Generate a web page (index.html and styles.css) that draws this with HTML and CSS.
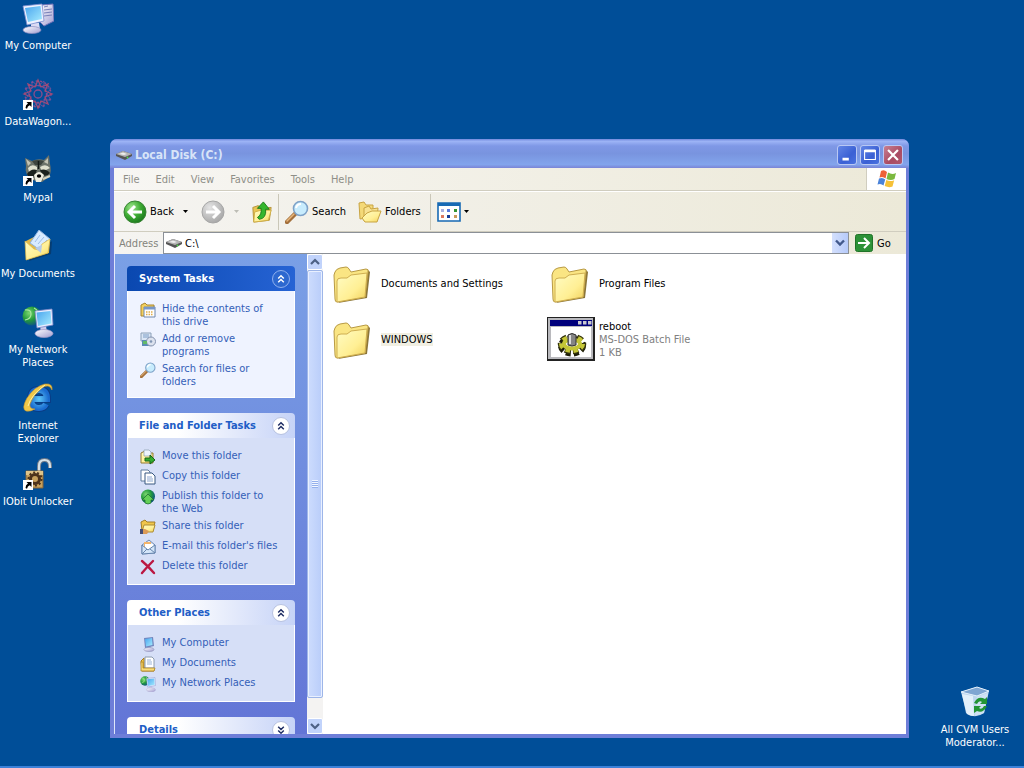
FILE: index.html
```html
<!DOCTYPE html>
<html lang="en">
<head>
<meta charset="utf-8">
<title>Local Disk (C:)</title>
<link rel="stylesheet" href="styles.css">
</head>
<body>
<svg class="defs" aria-hidden="true">
  <defs>
    <linearGradient id="gFolder" x1="0" y1="0" x2="1" y2="1"><stop offset="0" stop-color="#fffcc4"/><stop offset=".6" stop-color="#ffef94"/><stop offset="1" stop-color="#f0cf58"/></linearGradient>
    <linearGradient id="gScreen" x1="0" y1="0" x2="1" y2="1"><stop offset="0" stop-color="#4aa5ee"/><stop offset="1" stop-color="#a6ecff"/></linearGradient>
    <linearGradient id="gCase" x1="0" y1="0" x2="1" y2="1"><stop offset="0" stop-color="#ffffff"/><stop offset="1" stop-color="#a09cd0"/></linearGradient>
    <radialGradient id="gGreen" cx=".35" cy=".3" r=".8"><stop offset="0" stop-color="#a2e890"/><stop offset=".5" stop-color="#3fac34"/><stop offset="1" stop-color="#147018"/></radialGradient>
    <radialGradient id="gGrey" cx=".35" cy=".3" r=".8"><stop offset="0" stop-color="#e4e4e4"/><stop offset="1" stop-color="#a2a2a2"/></radialGradient>
    <radialGradient id="gGlobe" cx=".35" cy=".35" r=".75"><stop offset="0" stop-color="#7cd870"/><stop offset=".5" stop-color="#239a3c"/><stop offset="1" stop-color="#0a4890"/></radialGradient>
    <radialGradient id="gIe" cx=".5" cy=".5" r=".6"><stop offset="0" stop-color="#5fc8f8"/><stop offset="1" stop-color="#1a6cd0"/></radialGradient>
    <symbol id="folder" viewBox="0 0 38 38">
      <path d="M5 37 34 32 37 6 35 4 8 35Z" fill="#8b7538"/>
      <path d="M2 6Q3 3 7 2L13 1Q15 1 16 3L18 6 33 3Q36 3 35 6L32 31 4 36Q2 36 2 33L1 9Z" fill="#fae583" stroke="#b89a44"/>
      <path d="M4 15Q4 12 8 12L14 12 18 9 34 7 32 31 4 36Z" fill="url(#gFolder)" stroke="#cfae50"/>
    </symbol>
    <symbol id="computer" viewBox="0 0 32 32">
      <path d="M20 3 31 2 32 19 22 24 18 20Z" fill="url(#gCase)" stroke="#6f72b8"/>
      <path d="M22 5 26 4M22 8 30 7M22 11 30 10M22 14 30 13" stroke="#7880b8"/>
      <path d="M9 21h8l1 6H9Z" fill="#dcdcf4"/><ellipse cx="10" cy="28" rx="9" ry="3.500" fill="url(#gCase)" stroke="#8c8cc0" stroke-width=".7"/>
      <path d="M1 4 20 2 22 19 5 23Z" fill="#eef2ff" stroke="#7d8ed0" stroke-width=".8"/>
      <path d="M3 6 18.500 4 20 17 6 20Z" fill="url(#gScreen)"/>
    </symbol>
    <symbol id="network" viewBox="0 0 32 32">
      <circle cx="10" cy="10" r="9.500" fill="url(#gGlobe)"/><path d="M3 4Q9 3 9 8T3 14M12 2Q18 5 14 9" stroke="#a8e6a0" fill="none" stroke-width="1.200"/>
      <path d="M18 20h6l1 6h-6Z" fill="#cfcdec"/><ellipse cx="22" cy="27.500" rx="9" ry="4" fill="url(#gCase)" stroke="#a29bc8" stroke-width=".7"/>
      <path d="M13 5 30 3 31 19 15 22Z" fill="#e9eeff" stroke="#7b86c8" stroke-width=".8"/><path d="M14.500 6.500 28.500 5 29.500 17.500 16 20Z" fill="url(#gScreen)"/>
    </symbol>
    <symbol id="drive" viewBox="0 0 16 10">
      <path d="M0 4 7 1 16 4 16 6 9 10 0 6Z" fill="#555"/><path d="M0 4 7 1 16 4 9 7Z" fill="#b4b4b4"/><path d="M3 4 7 2.500 11 4 8 5Z" fill="#eee"/><circle cx="11.500" cy="7.500" r=".9" fill="#4fdc4a"/>
    </symbol>
    <symbol id="lens" viewBox="0 0 24 24">
      <path d="M2 22 10 14" stroke="#a4703c" stroke-width="4.500" stroke-linecap="round"/><path d="M2 21 9 14" stroke="#e7b67c" stroke-width="1.500" stroke-linecap="round"/>
      <circle cx="15.500" cy="8.500" r="7" fill="#c8ecfd" stroke="#7ea2c8" stroke-width="1.600"/><path d="M11 8Q12 4 16 4" stroke="#fff" stroke-width="2" fill="none"/>
    </symbol>
    <symbol id="shortcut" viewBox="0 0 10 10"><path d="M0 0h10v10H0Z" fill="#fff"/><path d="M3.500 2H8.500V7L6.800 5.300Q4.500 6 4 8.800L2.500 8Q2.500 5 5 3.600Z"/></symbol>
    <symbol id="chevUp" viewBox="0 0 20 20"><path d="M6.500 9.500 10 6 13.500 9.500M6.500 14 10 10.500 13.500 14" fill="none" stroke="currentColor" stroke-width="1.800"/></symbol>
    <symbol id="chevDown" viewBox="0 0 20 20"><path d="M6.500 6 10 9.500 13.500 6M6.500 10.500 10 14 13.500 10.500" fill="none" stroke="currentColor" stroke-width="1.800"/></symbol>
    <symbol id="caret" viewBox="0 0 5 3"><path d="M0 0h5L2.500 3Z" fill="currentColor"/></symbol>
    <symbol id="docs" viewBox="0 0 16 16"><path d="M1 5 4 2v10h10v3H2Z" fill="#f4cb4d" stroke="#a97c1b"/><path d="M5 1h7l2 2v9H5Z" fill="#fff" stroke="#8c9cae"/><path d="M7 4h4M7 6h5M7 8h5" stroke="#9ab2d6"/><path d="M1 6v9h13l1-3H5L3 12V6Z" fill="#f8dc78" stroke="#a97c1b" stroke-width=".7"/></symbol>
  </defs>
</svg>

<main class="desktop">
  <nav class="shortcuts" aria-label="Desktop">
    <a class="shortcut" href="#computer"><svg class="icon32"><use href="#computer"/></svg><span>My Computer</span></a>
    <a class="shortcut" href="#datawagon">
      <svg class="icon32" viewBox="0 0 32 32">
        <g fill="none" stroke="#8c4c8c" stroke-width="1.300"><circle cx="16" cy="16" r="4"/><circle cx="16" cy="16" r="8.500" stroke-dasharray="3 1"/><circle cx="16" cy="16" r="13" stroke-dasharray="2 2.500"/>
        <path d="M16 2 19 9 26 6 23 13 30 16 23 19 26 26 19 23 16 30 13 23 6 26 9 19 2 16 9 13 6 6 13 9Z" stroke="#a24a76"/><path d="M10 3 16 8 22 3 22 10 29 10 25 16 29 22 22 22 22 29 16 25 10 29 10 22 3 22 7 16 3 10 10 10Z" stroke="#77549c" stroke-width=".8"/></g>
        <use href="#shortcut" x="1" y="22" width="10" height="10"/>
      </svg><span>DataWagon...</span></a>
    <a class="shortcut" href="#mypal">
      <svg class="icon32" viewBox="0 0 32 32">
        <path d="M3 4 10 7Q16 4 22 6L27 1 28 10Q30 17 27 23L20 28 10 26Q2 20 4 12Z" fill="#6c736a"/>
        <path d="M4 5 9 9 6 12ZM26 4 26 10 22 8Z" fill="#c4c4b4"/><path d="M10 7Q16 5 22 7L19 11H13Z" fill="#3d443e"/><path d="M6 14Q10 9 15 13V18L7 18ZM18 13Q24 9 28 14L20 18Z" fill="#dfe0ce"/>
        <path d="M5 20Q9 14 15 16L14 21Q9 24 6 22ZM18 16Q24 14 28 19 25 23 20 21Z" fill="#1b211d"/><path d="M12 21Q17 15 22 21L19 28H14Z" fill="#efeee0"/><ellipse cx="17" cy="22" rx="2.200" ry="1.800"/><path d="M6 23 12 25M28 22 21 25" stroke="#d6d4c0" stroke-width="2"/><path d="M16.500 7V15" stroke="#131916" stroke-width="1.500"/>
        <use href="#shortcut" x="1" y="22" width="10" height="10"/>
      </svg><span>Mypal</span></a>
    <a class="shortcut" href="#documents">
      <svg class="icon32" viewBox="0 0 32 32"><path d="M7 31 29 24 30 11 8 28Z" fill="#093461" opacity=".7"/><path d="M4 11 12 7 28 10 27 23 4 30Z" fill="#e2ba49"/><path d="M8 13 17 0 28 9 21 22Z" fill="#d8ebff" stroke="#8fb2df"/><path d="M13 12 18 5M16 14 22 7M19 16 25 10" stroke="#9dbce8"/><path d="M3 11 12 19 17 20 20 14 28 9 26 23 4 30Z" fill="url(#gFolder)" stroke="#d9b648" stroke-width=".7"/><path d="M13 18 19 23 20 15Z" fill="#b5cae9"/></svg><span>My Documents</span></a>
    <a class="shortcut" href="#network"><svg class="icon32"><use href="#network"/></svg><span>My Network Places</span></a>
    <a class="shortcut" href="#ie">
      <svg class="icon32" viewBox="0 0 32 32"><path d="M10 17H25Q25 8 17 8T9 17Q9 26 17 26 22 26 24 22" stroke="#093c86" stroke-width="8" fill="none"/><path d="M10 17H25Q25 8 17 8T9 17Q9 26 17 26 22 26 24 22" stroke="url(#gIe)" stroke-width="6" fill="none"/><path d="M30 8Q31 1 23 2 13 4 5 16-1 27 4 29 8 30 13 27 7 27 8 22 11 13 20 6 27 1 30 8Z" fill="#f0c848" stroke="#c7952a" stroke-width=".6"/><path d="M6 24Q9 13 23 3" stroke="#fff1a4" stroke-width="1" fill="none"/></svg><span>Internet Explorer</span></a>
    <a class="shortcut" href="#unlocker">
      <svg class="icon32" viewBox="0 0 32 32"><path d="M17 14V8Q17 2 22.500 2T28 8V10" fill="none" stroke="#6c7888" stroke-width="4"/><path d="M17 14V8Q17 2 22.500 2T28 8V10" fill="none" stroke="#d5e0e7" stroke-width="2.200"/><path d="M4 13H21V30H4Z" fill="#c7a05c" stroke="#826339"/><path d="M4 13H21V17H4Z" fill="#e0c489"/><circle cx="13" cy="21" r="4.500" fill="none" stroke="#4c321b" stroke-width="3"/><circle cx="13" cy="21" r="6.500" fill="none" stroke="#4c321b" stroke-width="2" stroke-dasharray="2 2"/><use href="#shortcut" x="1" y="22" width="10" height="10"/></svg><span>IObit Unlocker</span></a>
  </nav>

  <section class="window" aria-label="Local Disk (C:)">
    <header class="titlebar">
      <svg class="drive"><use href="#drive"/></svg>
      <h1 class="title">Local Disk (C:)</h1>
      <button class="caption" aria-label="Minimize"><svg viewBox="0 0 20 20"><path d="M5 13h7v3H5Z" fill="#fff"/></svg></button>
      <button class="caption" aria-label="Maximize"><svg viewBox="0 0 20 20"><path d="M4 5H16V15H4Z" fill="none" stroke="#fff" stroke-width="1.200"/><path d="M4 5.500H16" stroke="#fff" stroke-width="3"/></svg></button>
      <button class="caption close" aria-label="Close"><svg viewBox="0 0 20 20"><path d="M4.500 4.500 15.500 15.500M15.500 4.500 4.500 15.500" stroke="#fff" stroke-width="2.400"/></svg></button>
    </header>

    <div class="menubar">
      <div class="menus">
        <button>File</button><button>Edit</button><button>View</button><button>Favorites</button><button>Tools</button><button>Help</button>
      </div>
      <div class="flag"><svg viewBox="0 0 20 18"><path d="M4 1Q7-1 10 2L8.500 8.500Q6 6 2.500 7.500Z" fill="#ee6238"/><path d="M11 2.500Q15 5 19 3L17.500 9Q14 11 9.500 9Z" fill="#7bb93f"/><path d="M2 8.500Q6 7 8.200 9.500L6.500 15.500Q4 13 .5 14.500Z" fill="#4b83d9"/><path d="M9.300 10Q13 12 17.200 10.200L15.500 16.500Q12 18 7.700 16Z" fill="#f6c137"/></svg></div>
    </div>

    <div class="toolbar">
      <button class="tool back"><svg class="round" viewBox="0 0 24 24"><circle cx="12" cy="12" r="11" fill="url(#gGreen)" stroke="#398434"/><path d="M19 12H7M12 6 6 12 12 18" fill="none" stroke="#fff" stroke-width="3"/></svg>Back<svg class="caret"><use href="#caret"/></svg></button>
      <button class="tool forward" aria-label="Forward" disabled><svg class="round" viewBox="0 0 24 24"><circle cx="12" cy="12" r="11" fill="url(#gGrey)" stroke="#a6a6a6"/><path d="M5 12H17M12 6 18 12 12 18" fill="none" stroke="#fff" stroke-width="3"/></svg><svg class="caret"><use href="#caret"/></svg></button>
      <button class="tool up" aria-label="Up"><svg viewBox="0 0 24 24"><path d="M2 7 8 5 10 8 22 7 20 21 3 23Z" fill="#e9c553" stroke="#b29139"/><path d="M4 12 11 10 22 10 19 21 3 23Z" fill="url(#gFolder)" stroke="#cfad44"/><path d="M9 20Q17 19 16 9H20L13.500 1 7 8H11Q12 15 7 18Z" fill="#35b62d" stroke="#187818"/></svg></button>
      <span class="rule"></span>
      <button class="tool search"><svg viewBox="0 0 24 24"><use href="#lens"/></svg>Search</button>
      <button class="tool folders"><svg viewBox="0 0 24 24"><path d="M1 3 6 2 8 5 15 5 15 17 2 19Z" fill="#f4d978" stroke="#c8a443"/><path d="M6 8 11 6 13 9 20 8 19 20 6 21Z" fill="#f8e292" stroke="#c8a443"/><path d="M9 13 14 11 23 11 19 22 7 22 4 18Z" fill="url(#gFolder)" stroke="#c8a443"/></svg>Folders</button>
      <span class="rule"></span>
      <button class="tool views" aria-label="Views"><svg viewBox="0 0 24 20"><path d="M1 1H23V19H1Z" fill="#fff" stroke="#176ab4" stroke-width="1.600"/><path d="M1 1H23V4H1Z" fill="#176ab4"/><path d="M4 7h3v3H4Z" fill="#aab2e0"/><path d="M10 7h3v3h-3Z" fill="#577be0"/><path d="M17 7h3v3h-3Z" fill="#329532"/><path d="M4 13h3v3H4Z" fill="#dc7a60"/><path d="M10 13h3v3h-3Z" fill="#173e98"/><path d="M17 13h3v3h-3Z" fill="#c79c59"/></svg><svg class="caret"><use href="#caret"/></svg></button>
    </div>

    <form class="address">
      <label for="path">Address</label>
      <div class="combo"><svg class="drive"><use href="#drive"/></svg><input id="path" type="text" value="C:\"><button type="button" class="drop" aria-label="Show addresses"><svg viewBox="0 0 10 8"><path d="M1 1.500 5 5.500 9 1.500" fill="none" stroke="#42598c" stroke-width="2.400"/></svg></button></div>
      <button type="button" class="go"><svg viewBox="0 0 18 18"><rect x=".5" y=".5" width="17" height="17" rx="2" fill="#2c9137" stroke="#207328"/><path d="M3 9H13M9 4 14 9 9 14" fill="none" stroke="#fff" stroke-width="2"/></svg>Go</button>
    </form>

    <div class="body">
      <aside class="tasks">
        <section class="panel primary">
          <h2><button>System Tasks<svg class="chev"><use href="#chevUp"/></svg></button></h2>
          <ul>
            <li><svg viewBox="0 0 16 16"><path d="M1 3 5 1 7 3H14V14H1Z" fill="#f3cf5c" stroke="#a98631"/><path d="M4 5H15V15H4Z" fill="#fff" stroke="#6e87ad"/><path d="M4 5H15V7.500H4Z" fill="#7897ca"/><path d="M6 10H13M6 12.500H13" stroke="#e1ad4a" stroke-width="1.500" stroke-dasharray="1.500 1"/></svg><a class="wrap" href="#hide">Hide the contents of this drive</a></li>
            <li><svg viewBox="0 0 16 16"><path d="M1 1H11V9H1Z" fill="#dbe6f5" stroke="#8da1b9"/><path d="M3 3H9M3 5H9" stroke="#7c9dc5"/><path d="M2 8H9L12 14H2Z" fill="#5b8bb4"/><circle cx="11" cy="9.500" r="4.500" fill="#dce2ee" stroke="#8492ae"/><circle cx="11" cy="9.500" r="1.300" fill="#8095b4"/><path d="M3 9H7V12H3Z" fill="#63bb67"/></svg><a class="wrap" href="#programs">Add or remove programs</a></li>
            <li><svg viewBox="0 0 24 24"><use href="#lens"/></svg><a class="wrap" href="#search">Search for files or folders</a></li>
          </ul>
        </section>
        <section class="panel">
          <h2><button>File and Folder Tasks<svg class="chev"><use href="#chevUp"/></svg></button></h2>
          <ul>
            <li><svg viewBox="0 0 16 16"><path d="M1 4 5 2 7 4H13V14H1Z" fill="url(#gFolder)" stroke="#957a32"/><path d="M4 1H9L11 3V7H4Z" fill="#eef4ff" stroke="#8b9dae" stroke-width=".7"/><path d="M5 9H10V6L15 11 10 15V12H5Z" fill="#34ad2e" stroke="#16651a"/></svg><a href="#move">Move this folder</a></li>
            <li><svg viewBox="0 0 16 16"><path d="M1 1H8L10 3V12H1Z" fill="#fff" stroke="#617c9e"/><path d="M5 4H12L15 7V15H5Z" fill="#fff" stroke="#385880"/><path d="M7 8H12M7 10H13M7 12H13" stroke="#8da7cf"/></svg><a href="#copy">Copy this folder</a></li>
            <li><svg viewBox="0 0 16 16"><circle cx="8" cy="7.500" r="7" fill="url(#gGlobe)"/><path d="M8 5 14 11H11V14Q8 16 5 14V11H2Z" fill="#64d057" stroke="#17652a" stroke-width=".7"/></svg><a class="wrap" href="#publish">Publish this folder to the Web</a></li>
            <li><svg viewBox="0 0 16 16"><path d="M1 3 5 1 7 3H15L13 12H2Z" fill="#f0c64b" stroke="#a27e29"/><path d="M4 6H15L13 13H2Z" fill="url(#gFolder)" stroke="#ad8c37"/><path d="M0 10H5L9 12 7 15H0Z" fill="#db9b58"/><path d="M0 10H3V15H0Z" fill="#444c74"/></svg><a href="#share">Share this folder</a></li>
            <li><svg viewBox="0 0 16 16"><path d="M2 6 9 1 15 6V14L2 15Z" fill="#dbe8fa" stroke="#6f8ab2"/><path d="M4 3H11V9H4Z" fill="#f4b56b"/><path d="M5 5H13V10H5Z" fill="#fff"/><path d="M2 6 8 11 15 6V14L2 15Z" fill="#d4e6fa" stroke="#6785ad"/><path d="M2 15 7 10M15 14 10 10" stroke="#6785ad"/></svg><a href="#mail">E-mail this folder's files</a></li>
            <li><svg viewBox="0 0 16 16"><path d="M2 2Q8 7 14 14M13 2Q7 8 2 14" fill="none" stroke="#bb1742" stroke-width="2.400" stroke-linecap="round"/></svg><a href="#delete">Delete this folder</a></li>
          </ul>
        </section>
        <section class="panel">
          <h2><button>Other Places<svg class="chev"><use href="#chevUp"/></svg></button></h2>
          <ul>
            <li><svg viewBox="0 0 16 16"><path d="M7 10H11V14H7Z" fill="#b8bddb"/><ellipse cx="9" cy="13.500" rx="5" ry="2" fill="url(#gCase)" stroke="#8b90b5" stroke-width=".6"/><path d="M4 2 13 1 14 10 5 12Z" fill="#7285bd"/><path d="M5 3 12 2 12.500 9 6 10.500Z" fill="url(#gScreen)"/></svg><a href="#mycomputer">My Computer</a></li>
            <li><svg><use href="#docs"/></svg><a href="#mydocuments">My Documents</a></li>
            <li><svg><use href="#network"/></svg><a href="#mynetwork">My Network Places</a></li>
          </ul>
        </section>
        <section class="panel">
          <h2><button>Details<svg class="chev"><use href="#chevDown"/></svg></button></h2>
        </section>
      </aside>
      <div class="scrollbar">
        <button class="arrow" aria-label="Scroll up"><svg viewBox="0 0 10 8"><path d="M1 6 5 2 9 6" fill="none" stroke="#4d6185" stroke-width="2.200"/></svg></button>
        <div class="thumb"><span class="grip"></span></div>
        <button class="arrow" aria-label="Scroll down"><svg viewBox="0 0 10 8"><path d="M1 2 5 6 9 2" fill="none" stroke="#4d6185" stroke-width="2.200"/></svg></button>
      </div>
      <div class="files">
        <a class="file" href="#das"><svg class="big"><use href="#folder"/></svg><span>Documents and Settings</span></a>
        <a class="file" href="#pf"><svg class="big"><use href="#folder"/></svg><span>Program Files</span></a>
        <a class="file" href="#win"><svg class="big"><use href="#folder"/></svg><span class="selected">WINDOWS</span></a>
        <a class="file" href="#reboot">
          <svg class="bat" viewBox="0 0 48 44"><path d="M0 0H48V44H0Z" fill="#222"/><path d="M1 1H46V42H1Z" fill="#b9b9bd"/><path d="M4 10H44V40H4Z" fill="#fff"/><path d="M3 3H45V9H3Z" fill="#00007c"/><path d="M31 4h3.500v3.500H31ZM36 4h3.500v3.500H36ZM41 4h3.500v3.500H41Z" fill="#c8c8d0"/>
          <ellipse cx="25" cy="29" rx="10.500" ry="7" fill="none" stroke="#1d1d08" stroke-width="7" stroke-dasharray="4.500 3"/><ellipse cx="25" cy="27" rx="10.500" ry="6.500" fill="none" stroke="#33330c" stroke-width="7.500" stroke-dasharray="5 2.500"/><ellipse cx="25" cy="27" rx="10" ry="6" fill="none" stroke="#c5c637" stroke-width="6" stroke-dasharray="4 3.250"/><ellipse cx="25" cy="27" rx="8" ry="4.500" fill="#fff" stroke="#c5c637" stroke-width="4"/><path d="M21 18Q25 15 29 18V28Q25 30 21 28Z" fill="#858585" stroke="#333"/><path d="M23 18V27" stroke="#ddd" stroke-width="2"/></svg>
          <span>reboot<br><small>MS-DOS Batch File<br>1 KB</small></span></a>
      </div>
    </div>
  </section>

  <a class="shortcut bin" href="#bin">
    <svg class="icon32" viewBox="0 0 32 32"><path d="M2 6 18 1 30 5 25 27Q17 33 8 28Z" fill="#bcd6ee"/><path d="M2 6 18 1 30 5 18 10Z" fill="#7fa6d2" stroke="#e4f0fb"/><path d="M3 8 14 10 15 30Q10 30 7 27Z" fill="#eaf4fd" opacity=".85"/><path d="M18 11 29 7 25 27 16 30Z" fill="#cfe1f4"/><path d="M15 17Q19 9 26 13L28 11V18H21L23 16Q20 14 18 18ZM28 20Q24 28 18 25L15 27V20H22L20 22Q23 24 25 20Z" fill="#239535"/></svg>
    <span>All CVM Users Moderator...</span></a>
</main>
</body>
</html>
```
FILE: styles.css
```css
* { box-sizing: border-box; }

body {
  margin: 0;
  font-family: "DejaVu Sans Condensed", "DejaVu Sans", sans-serif;
  font-size: 11px;
  line-height: 13px;
  color: #000;
}

a { color: inherit; text-decoration: none; }

button {
  margin: 0;
  padding: 0;
  border: 0;
  background: none;
  font: inherit;
  color: inherit;
}

svg { display: block; flex: none; }
.defs { position: absolute; width: 0; height: 0; }

.desktop {
  position: relative;
  min-height: 100vh;
  background: #004e98;
  border-bottom: 2px solid #3c81d8;
  overflow: hidden;
}

.shortcuts {
  display: grid;
  grid-auto-rows: 76px;
  width: 76px;
  padding-top: 2px;
}

.shortcut {
  display: flex;
  flex-direction: column;
  align-items: center;
  gap: 5px;
  color: #fff;
  text-align: center;
}

.icon32 { width: 32px; height: 32px; }

.bin {
  position: absolute;
  right: 8px;
  bottom: 17px;
  width: 82px;
}

.window {
  position: absolute;
  top: 139px;
  right: 115px;
  bottom: 28px;
  left: 110px;
  display: flex;
  flex-direction: column;
  padding: 0 3px 4px 4px;
  background: #6e7ed8;
  border-radius: 7px 7px 0 0;
  overflow: hidden;
}

.titlebar {
  display: flex;
  align-items: center;
  gap: 3px;
  height: 29px;
  flex: none;
  margin: 0 -3px 0 -4px;
  padding: 2px 6px 0 6px;
  background: linear-gradient(#7088dc 0, #9db4f6 8%, #7f98e6 24%, #7994df 50%, #82a4ec 88%, #7a84d6 100%);
}

.drive { width: 16px; height: 10px; }

.title {
  flex: 1;
  margin: 0;
  font-size: 12px;
  line-height: 16px;
  color: #d8e4f8;
}

.caption {
  width: 20px;
  height: 20px;
  border: 1px solid #b9c8f4;
  border-radius: 3px;
  background: linear-gradient(135deg, #6386e6, #3a60d4 60%, #4a72e0);
}

.close { background: linear-gradient(135deg, #c98092, #a94b63 60%, #b0566c); }
.caption svg { width: 18px; height: 18px; }

.menubar {
  display: flex;
  height: 23px;
  flex: none;
  background: linear-gradient(90deg, #f7f6f3, #ece9d8);
  border-bottom: 1px solid #d0cdbf;
}

.menus { display: flex; flex: 1; padding-left: 1px; color: #8f8f88; }
.menus button { padding: 0 8px; }

.flag {
  display: flex;
  align-items: center;
  justify-content: center;
  width: 40px;
  background: #fff;
  border-left: 1px solid #d0cdbf;
}

.flag svg { width: 20px; height: 18px; }

.toolbar {
  display: flex;
  align-items: center;
  height: 40px;
  flex: none;
  padding-left: 9px;
  background: linear-gradient(90deg, #f5f4f1, #ece9d8);
  border-top: 1px solid #fff;
}

.tool { display: flex; align-items: center; gap: 3px; margin-right: 12px; }
.tool svg { width: 24px; height: 24px; }
.tool svg.caret { width: 5px; height: 3px; margin-left: 6px; }
.back { margin-right: 13px; }
.forward { color: #bdbdb5; }
.tool.up { margin-right: 5px; }
.tool.up svg { width: 22px; }
.toolbar .views svg:first-child { height: 20px; }
.tool.views svg.caret { margin-left: 0; }
.folders { margin-right: 9px; }
.rule { width: 1px; height: 36px; margin-right: 6px; background: #cac7b8; }

.address {
  display: flex;
  align-items: center;
  height: 23px;
  flex: none;
  margin: 0;
  padding-left: 5px;
  background: linear-gradient(90deg, #f5f4f1, #ece9d8);
  border-top: 1px solid #d0cdbf;
}

.address label { width: 44px; color: #84847c; }

.combo {
  display: flex;
  align-items: center;
  flex: 1;
  height: 22px;
  padding-left: 2px;
  background: #fff;
  border: 1px solid #8b9096;
}

.combo input {
  flex: 1;
  min-width: 0;
  padding: 0 3px;
  border: 0;
  outline: 0;
  background: none;
  font: inherit;
}

.drop {
  display: grid;
  place-items: center;
  width: 16px;
  height: 20px;
  background: linear-gradient(90deg, #d4e0fd, #b6cafa);
}

.drop svg { width: 10px; height: 8px; }
.go { display: flex; align-items: center; gap: 4px; width: 57px; padding-left: 6px; }
.go svg { width: 18px; height: 18px; }

.body { display: flex; flex: 1; min-height: 0; background: #fff; }

.tasks {
  display: flex;
  flex-direction: column;
  gap: 15px;
  flex: none;
  width: 193px;
  padding: 12px 12px 0 12px;
  overflow: hidden;
  background: linear-gradient(#7aa0e6, #6375d6);
  border-left: 1px solid #dfe6fa;
}

.panel { flex: none; color: #215dc6; }

.panel h2 {
  margin: 0;
  font-size: 11px;
  line-height: 13px;
  border-radius: 4px 4px 0 0;
  background: linear-gradient(90deg, #fff 30%, #c6d3f7);
}

.panel h2 button {
  display: flex;
  align-items: center;
  justify-content: space-between;
  width: 100%;
  height: 25px;
  padding: 0 5px 0 12px;
}

.chev {
  width: 18px;
  height: 18px;
  border: 1px solid #b7c2e0;
  border-radius: 50%;
  background: #fff;
  color: #1d2c63;
}

.panel ul {
  display: flex;
  flex-direction: column;
  gap: 4px;
  margin: 0;
  padding: 11px 8px 9px 12px;
  list-style: none;
  background: #d6dff7;
  border: 1px solid #fff;
  border-top: 0;
}

.panel li { display: flex; gap: 6px; color: #3460b8; }
.panel li svg { width: 16px; height: 16px; }
.wrap { max-width: 112px; }

.primary h2 { background: linear-gradient(90deg, #0a48b0, #2663d4); color: #fff; }
.primary ul { background: #eff3ff; }
.primary .chev { background: #2d68cf; border-color: #8fb0ee; color: #fff; }

.scrollbar {
  display: flex;
  flex-direction: column;
  flex: none;
  width: 16px;
  background: #f4f3f2;
}

.arrow {
  display: grid;
  place-items: center;
  height: 16px;
  border: 1px solid #fff;
  border-radius: 2px;
  background: #c1d3fb;
}

.arrow svg { width: 10px; height: 8px; }

.thumb {
  display: grid;
  place-items: center;
  flex: 1;
  margin-bottom: 20px;
  background: linear-gradient(90deg, #cddcfd, #b9cdfa);
  border: 1px solid #9db5e8;
  box-shadow: inset 0 0 0 1px #e9f0ff;
  border-radius: 2px;
}

.grip {
  width: 6px;
  height: 8px;
  background: repeating-linear-gradient(#f2f6ff 0 1px, #94b0ec 1px 2px);
}

.files {
  display: grid;
  grid-template-columns: repeat(auto-fill, 218px);
  grid-auto-rows: 48px;
  gap: 8px 0;
  flex: 1;
  align-content: start;
  padding: 5px 0 0 6px;
}

.file { display: flex; align-items: center; }
.big { width: 38px; height: 38px; margin: 4px 10px 0 4px; }
.bat { width: 48px; height: 44px; margin-right: 4px; }
.file small { font-size: 11px; color: #808080; }
.selected { background: #f1efe2; }
```
